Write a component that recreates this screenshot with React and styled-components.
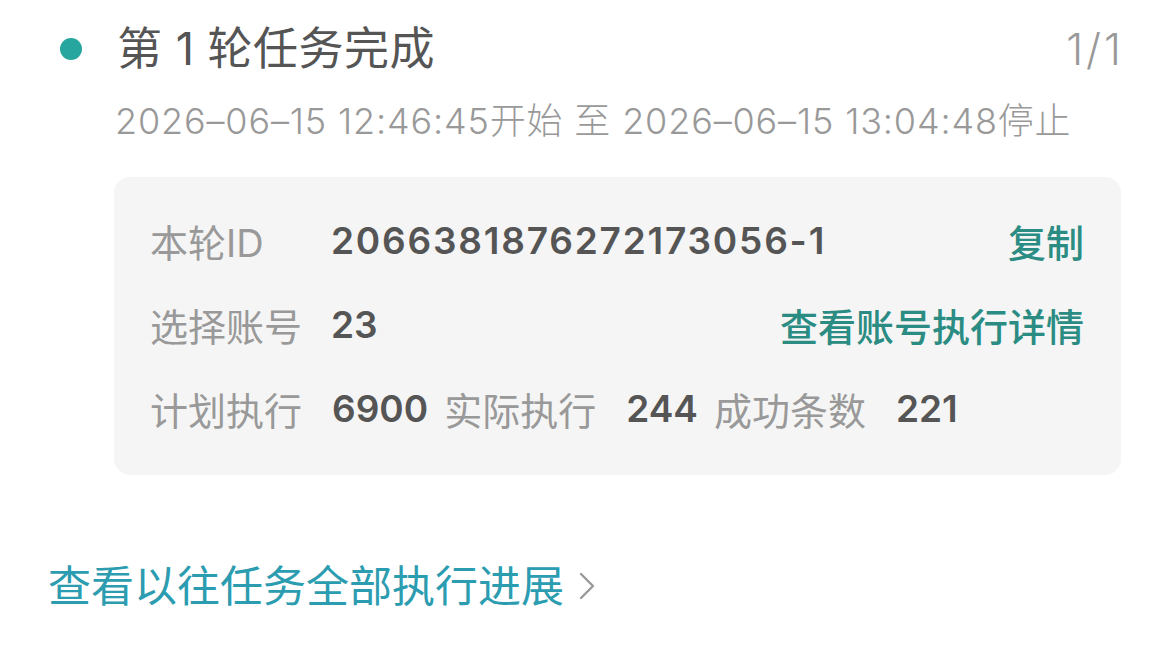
import React from "react";
import styled, { createGlobalStyle } from "styled-components";

const GlobalStyle = createGlobalStyle`
  html, body {
    margin: 0;
    padding: 0;
    background: #ffffff;
  }
  body {
    font-family: "Inter", "Noto Sans CJK SC", sans-serif;
    -webkit-font-smoothing: antialiased;
  }
`;

const Page = styled.div`
  width: 1170px;
  height: 648px;
  box-sizing: border-box;
  padding: 19px 49px 0 60px;
  display: flex;
  flex-direction: column;
  color: #555;
`;

const Header = styled.div`
  display: flex;
  align-items: center;
  height: 60px;
`;

const Dot = styled.span`
  width: 22px;
  height: 22px;
  border-radius: 50%;
  background: #26a69e;
  flex-shrink: 0;
  margin-right: 35px;
`;

const Title = styled.div`
  flex: 1;
  font-size: 45px;
  color: #555;
  line-height: 60px;
  letter-spacing: 0.5px;
`;

const Counter = styled.div`
  font-size: 43px;
  font-weight: 300;
  color: #999;
  line-height: 60px;
  letter-spacing: 3px;
  margin-right: -3px;
`;

const Time = styled.div`
  margin-left: 55px;
  margin-top: 20px;
  font-size: 36px;
  font-weight: 300;
  line-height: 44px;
  color: #999;
  white-space: nowrap;
  letter-spacing: 0.85px;
`;

const Card = styled.div`
  margin: 34px 0 0 54px;
  background: #f5f5f5;
  border-radius: 16px;
  padding: 21px 37px 25px 36px;
  display: flex;
  flex-direction: column;
`;

const Row = styled.div`
  display: flex;
  align-items: center;
  height: 84px;
  white-space: nowrap;
`;

const Label = styled.span`
  font-size: 38px;
  color: #999;
  width: ${(p) => (p.$wide ? "181px" : "auto")};
  margin-right: ${(p) => (p.$wide ? "0" : "30px")};
  flex-shrink: 0;
`;

const Value = styled.span`
  font-size: 37px;
  font-weight: 600;
  color: #555;
  letter-spacing: ${(p) => (p.$spaced ? "1.8px" : "0")};
  margin-right: ${(p) => (p.$gap ? "16px" : "0")};
`;

const Action = styled.a`
  margin-left: auto;
  font-size: 38px;
  font-weight: 500;
  color: #2a8c82;
  text-decoration: none;
`;

const Link = styled.a`
  margin: 81px 0 0 -12px;
  display: flex;
  align-items: center;
  font-size: 43px;
  color: #2c9cb0;
  text-decoration: none;
  line-height: 60px;
`;

const Chevron = styled.svg`
  width: 18px;
  height: 30px;
  margin-left: 14px;
`;

export default function App() {
  return (
    <>
      <GlobalStyle />
      <Page>
        <Header>
          <Dot />
          <Title>第 1 轮任务完成</Title>
          <Counter>1/1</Counter>
        </Header>
        <Time>2026–06–15 12:46:45开始 至 2026–06–15 13:04:48停止</Time>
        <Card>
          <Row>
            <Label $wide>本轮ID</Label>
            <Value $spaced>2066381876272173056-1</Value>
            <Action>复制</Action>
          </Row>
          <Row>
            <Label $wide>选择账号</Label>
            <Value>23</Value>
            <Action>查看账号执行详情</Action>
          </Row>
          <Row>
            <Label>计划执行</Label>
            <Value $gap>6900</Value>
            <Label>实际执行</Label>
            <Value $gap>244</Value>
            <Label>成功条数</Label>
            <Value>221</Value>
          </Row>
        </Card>
        <Link>
          查看以往任务全部执行进展
          <Chevron viewBox="0 0 18 30" fill="none">
            <path d="M3 3 L15 15 L3 27" stroke="#999" strokeWidth="2.4" strokeLinecap="round" strokeLinejoin="round" />
          </Chevron>
        </Link>
      </Page>
    </>
  );
}
